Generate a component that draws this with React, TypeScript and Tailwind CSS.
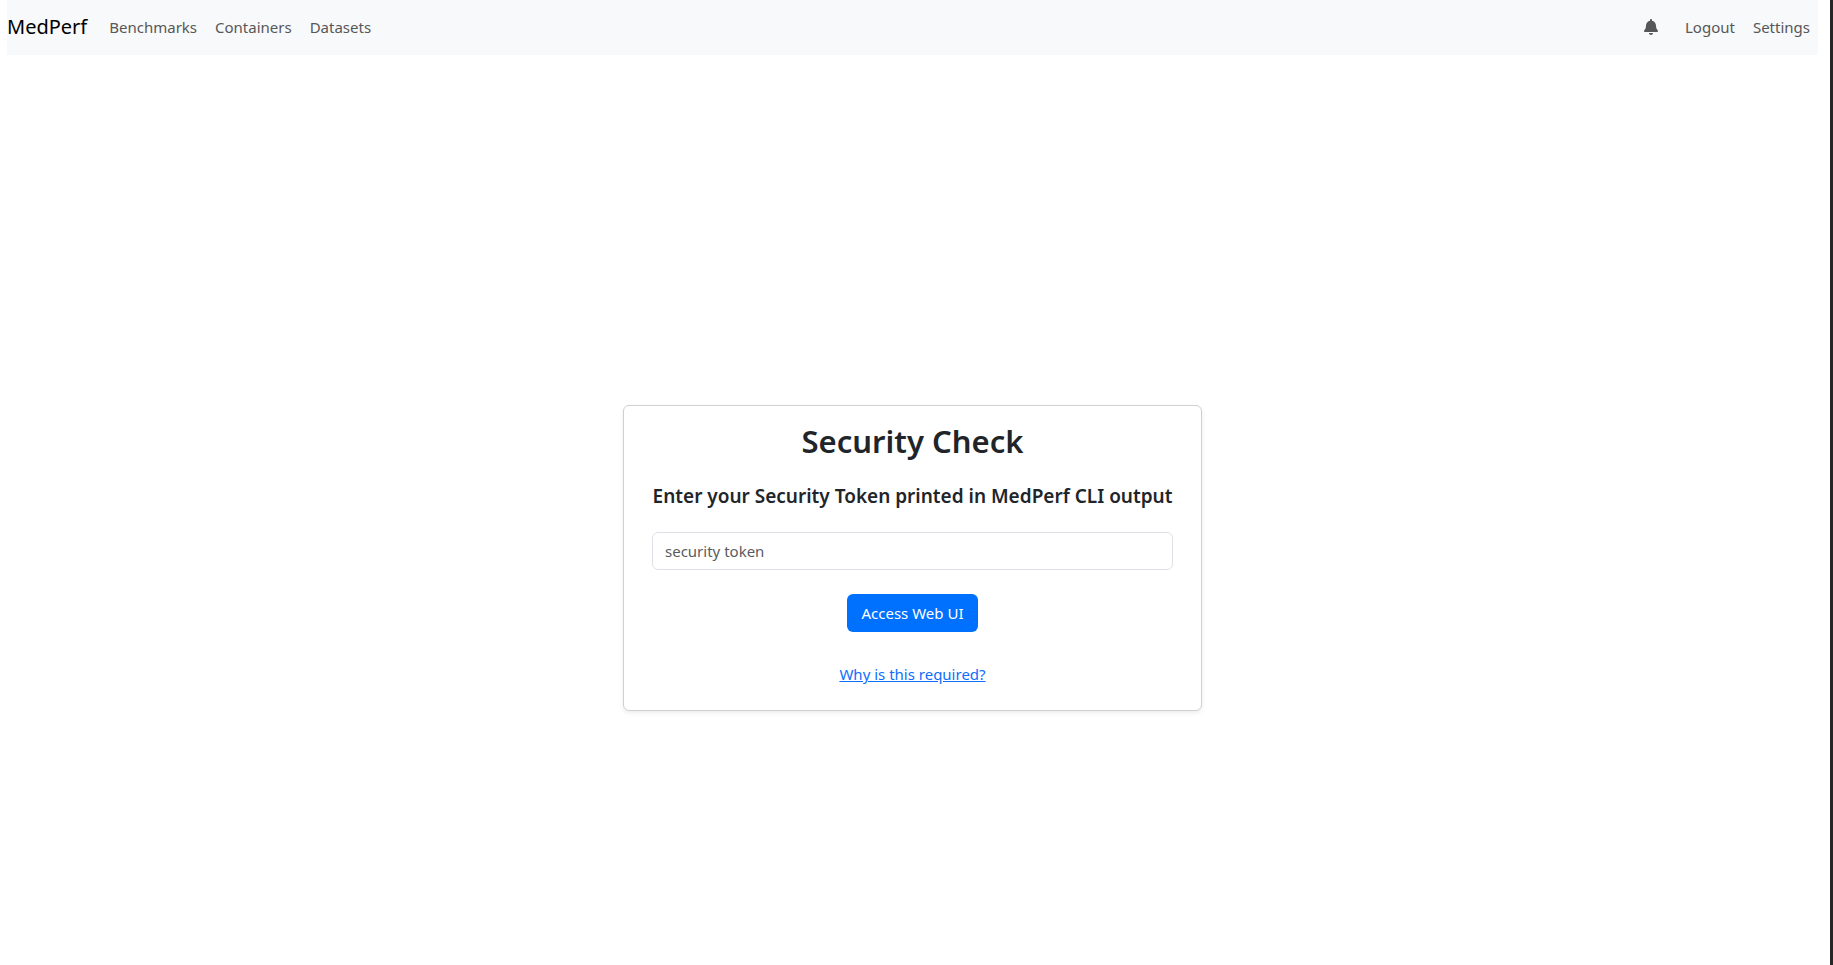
import { useState } from "react";
import { FaBell } from "react-icons/fa";

const navLinks = ["Benchmarks", "Containers", "Datasets"];
const accountLinks = ["Logout", "Settings"];

function NavBar() {
  return (
    <nav className="flex h-[55px] items-center bg-[#f8f9fa] pb-0.5">
      <a href="#" className="mr-3.5 text-[20px] leading-[30px] text-black">
        MedPerf
      </a>
      <ul className="flex gap-0.5">
        {navLinks.map((label) => (
          <li key={label}>
            <a href="#" className="block p-2 text-[15px] leading-6 text-[#565758]">
              {label}
            </a>
          </li>
        ))}
      </ul>
      <ul className="ml-auto flex items-center gap-0.5">
        <li className="mr-2">
          <button type="button" aria-label="Notifications" className="block p-2 text-[#565758]">
            <FaBell className="h-4 w-4" />
          </button>
        </li>
        {accountLinks.map((label) => (
          <li key={label}>
            <a href="#" className="block p-2 text-[15px] leading-6 text-[#565758]">
              {label}
            </a>
          </li>
        ))}
      </ul>
    </nav>
  );
}

function SecurityCard() {
  const [token, setToken] = useState("");
  return (
    <form
      onSubmit={(event) => event.preventDefault()}
      className="flex w-[579px] max-w-full flex-col items-center rounded-md border border-[#cfd0d1] bg-white px-7 pt-4 pb-6 shadow-[0_2px_4px_rgba(0,0,0,0.075)]"
    >
      <h1 className="text-center text-[31px] leading-[38px] font-semibold">Security Check</h1>
      <label htmlFor="token" className="mt-6 text-center text-[19px] leading-6 font-semibold">
        Enter your Security Token printed in MedPerf CLI output
      </label>
      <input
        id="token"
        type="text"
        value={token}
        onChange={(event) => setToken(event.target.value)}
        placeholder="security token"
        className="mt-6 h-[38px] w-full rounded-md border border-[#dee2e6] bg-white px-3 text-[15px] leading-6 placeholder:text-[#595c5f]"
      />
      <button
        type="submit"
        className="mt-6 h-[38px] rounded-md bg-[#0070ff] px-3.5 text-[15px] leading-6 text-white"
      >
        Access Web UI
      </button>
      <a href="#" className="mt-[30px] text-[15px] leading-6 text-[#0d6efd] underline">
        Why is this required?
      </a>
    </form>
  );
}

export default function App() {
  return (
    <div className="flex min-h-screen flex-col border-r-[3px] border-[#262626] bg-white pr-3 pl-[7px] font-['Noto_Sans',sans-serif] text-[#212529]">
      <NavBar />
      <main className="flex flex-1 items-center justify-center pt-24">
        <SecurityCard />
      </main>
    </div>
  );
}
